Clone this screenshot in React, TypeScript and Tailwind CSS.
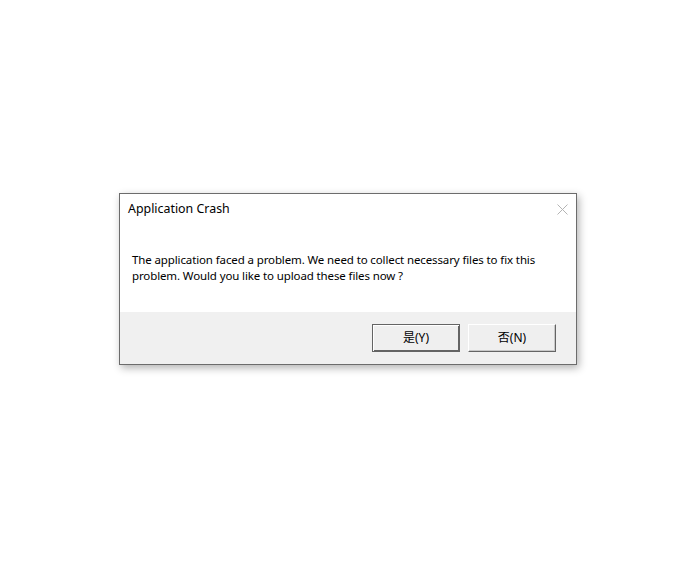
const FONT = "font-['Segoe_UI','Noto_Sans','Noto_Sans_CJK_SC',sans-serif]"

function DialogButton({ label, primary }: { label: string; primary?: boolean }) {
  return (
    <button
      type="button"
      className={
        primary
          ? "w-[88px] h-[28px] bg-[#efefef] border border-[#646464] shadow-[inset_1px_1px_0_#ffffff,inset_-1px_-1px_0_#646464] text-[12px] text-black flex items-center justify-center"
          : "w-[88px] h-[28px] bg-[#efefef] border border-t-white border-l-white border-b-[#646464] border-r-[#646464] shadow-[inset_-1px_-1px_0_#c8c8c8] text-[12px] text-black flex items-center justify-center"
      }
    >
      {label}
    </button>
  )
}

export default function App() {
  return (
    <div className={`w-[696px] h-[564px] bg-white flex flex-col items-center pt-[193px] ${FONT}`}>
      <div className="w-[458px] h-[172px] border border-[#6c6c6c] bg-white flex flex-col shadow-[2px_3px_8px_rgba(0,0,0,0.3)]">
        <div className="h-[118px] flex flex-col">
          <div className="h-[30px] flex items-center justify-between pl-[8px] pr-[8px]">
            <span className="text-[12.4px] text-black">Application Crash</span>
            <svg width="11" height="11" viewBox="0 0 11 11" className="mt-[1px]">
              <path d="M0.5 0.5 L10.5 10.5 M10.5 0.5 L0.5 10.5" stroke="#b4b4b4" strokeWidth="1" fill="none" />
            </svg>
          </div>
          <p className="pl-[12px] pt-[28px] text-[11.5px] tracking-[-0.12px] leading-[16px] text-black w-[430px]">
            The application faced a problem. We need to collect necessary files to fix this problem. Would you like to upload these files now ?
          </p>
        </div>
        <div className="flex-1 bg-[#f0f0f0] flex justify-end items-start gap-[8px] pt-[12px] pr-[20px]">
          <DialogButton label="是(Y)" primary />
          <DialogButton label="否(N)" />
        </div>
      </div>
    </div>
  )
}
